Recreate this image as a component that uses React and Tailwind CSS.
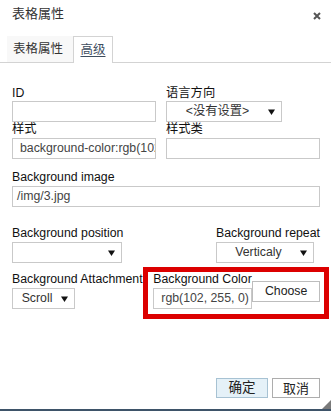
import React from "react"

const Arrow = () => (
  <svg width="7" height="6" viewBox="0 0 7 6" className="shrink-0">
    <path d="M0 0.5h7L3.5 6z" fill="#111" />
  </svg>
)

function Select({ text, className }) {
  return (
    <div className={`h-[21px] border border-[#c9c9c9] bg-white flex items-center pr-[6px] text-[#333] ${className}`}>
      <span className="flex-1 text-center whitespace-nowrap">{text}</span>
      <Arrow />
    </div>
  )
}

function Field({ value, className, pad }) {
  return (
    <div className={`h-[21px] border border-[#c9c9c9] bg-white flex items-center overflow-hidden whitespace-nowrap text-[#444] ${pad} ${className}`}>
      {value}
    </div>
  )
}

export default function App() {
  return (
    <div className="relative w-[331px] h-[413px] bg-white flex flex-col overflow-hidden font-[family-name:'Liberation_Sans','Noto_Sans_CJK_SC',sans-serif] text-[12.3px] text-[#111]">
      {/* Title bar */}
      <div className="h-[36px] flex items-start justify-between pl-[12px] pr-[10px] pt-[6px]">
        <span className="text-[13px] leading-[16px] text-[#333]">表格属性</span>
        <svg className="mt-[6px]" width="8" height="8" viewBox="0 0 8 8">
          <path d="M1 1l6 6M7 1l-6 6" stroke="#555" strokeWidth="2" />
        </svg>
      </div>

      {/* Tabs */}
      <div className="h-[27px] flex items-end pl-[7px] border-b border-[#d3d3d3]">
        <div className="w-[66px] h-[26px] bg-[#f8f8f8] flex items-center pl-[6px] text-[12.5px] text-[#333]">
          表格属性
        </div>
        <div className="w-[40px] h-[27px] -mb-px border border-b-0 border-[#d3d3d3] bg-white flex items-center justify-center text-[12.5px] text-[#3d4d5e] underline underline-offset-2">
          高级
        </div>
      </div>

      {/* Form */}
      <div className="pl-[12px] pr-[11px] pt-[23px]">
        <div className="flex gap-[10px]">
          <div className="w-[144px]">
            <div className="leading-[15px]">ID</div>
            <Field value="" />
          </div>
          <div className="flex-1">
            <div className="leading-[15px]">语言方向</div>
            <Select text="<没有设置>" className="w-[116px]" />
          </div>
        </div>

        <div className="flex gap-[10px]">
          <div className="w-[144px]">
            <div className="leading-[15px]">样式</div>
            <Field value="background-color:rgb(102, 255, 0);" pad="pl-[7px]" className="mt-[1px]" />
          </div>
          <div className="flex-1">
            <div className="leading-[15px]">样式类</div>
            <Field value="" className="mt-[1px]" />
          </div>
        </div>

        <div className="mt-[11px]">
          <div className="leading-[15px]">Background image</div>
          <Field value="/img/3.jpg" pad="pl-[4px]" className="mt-[1px]" />
        </div>

        <div className="mt-[19px] flex justify-between">
          <div>
            <div className="leading-[15px]">Background position</div>
            <Select text="" className="w-[110px] mt-[1px]" />
          </div>
          <div className="w-[104px]">
            <div className="leading-[15px] whitespace-nowrap">Background repeat</div>
            <Select text="Verticaly" className="w-[98px] mt-[1px]" />
          </div>
        </div>

        <div className="mt-[9px] flex">
          <div className="w-[142px]">
            <div className="leading-[15px] whitespace-nowrap">Background Attachment</div>
            <Select text="Scroll" className="w-[63px] mt-[1px]" />
          </div>
          <div className="w-[99px]">
            <div className="leading-[15px] whitespace-nowrap">Background Color</div>
            <Field value="rgb(102, 255, 0)" pad="pl-[7px]" className="mt-[1px] w-[99px]" />
          </div>
          <button className="mt-[9px] w-[68px] h-[21px] border border-[#bdbdbd] bg-white text-[12.3px] text-[#222]">
            Choose
          </button>
        </div>
      </div>

      {/* Footer */}
      <div className="mt-auto flex justify-end gap-[4px] pr-[11px] pb-[11px]">
        <button className="w-[52px] h-[20px] border border-[#a7c2d3] bg-[#e5f1f8] text-[13.5px] text-[#222] leading-none">
          确定
        </button>
        <button className="w-[48px] h-[20px] border border-[#adadad] bg-white text-[13px] text-[#222] leading-none">
          取消
        </button>
      </div>
      <div className="h-[2px] bg-[#3e5369]" />
      <div className="h-[2px] bg-white" />

      {/* Resize grip */}
      <svg className="absolute right-0 bottom-[4px]" width="9" height="9" viewBox="0 0 9 9">
        <path d="M9 0v9H0z" fill="#7a7a7a" />
      </svg>

      {/* Annotation */}
      <div className="absolute left-[143px] top-[267px] w-[186px] h-[52px] border-[5px] border-[#dc0000]" />
    </div>
  )
}
